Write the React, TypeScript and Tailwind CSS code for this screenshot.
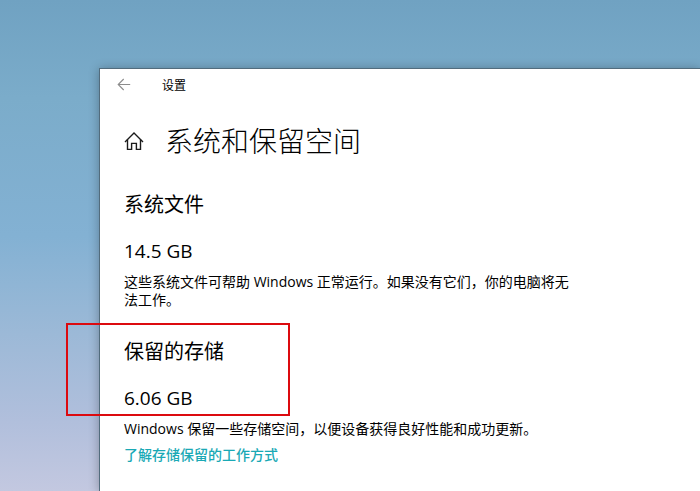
import React from "react";

const backIcon = () => (
  <svg width="14" height="14" viewBox="0 0 14 14" fill="none" stroke="#8c8c8c" strokeWidth="1.1">
    <path d="M13.2 6.5H1.2M6.7 1L1.2 6.5L6.7 12" />
  </svg>
);

const homeIcon = () => (
  <svg width="20" height="20" viewBox="0 0 20 20" fill="none" stroke="#1a1a1a" strokeWidth="1.4">
    <path d="M1 10.9L10 2.1L19 10.9" />
    <path d="M3.5 8.6V18.4H7.6V12.4H12.4V18.4H16.5V8.6" />
  </svg>
);

interface StorageSectionProps {
  title: string;
  size: string;
  highlighted?: boolean;
  children: React.ReactNode;
}

const StorageSection = ({ title, size, highlighted, children }: StorageSectionProps) => (
  <section className="relative">
    {/* red marker around the title and the size */}
    {highlighted && (
      <div className="absolute -top-[17px] -left-[58px] h-[93px] w-56 border-2 border-[#dc0a0f]" />
    )}
    <h2 className="text-xl leading-6">{title}</h2>
    <p className="mt-[22px] text-[19px] leading-6">{size}</p>
    <div className="mt-2.5 text-sm leading-[18px]">{children}</div>
  </section>
);

export default function App() {
  return (
    <div className="flex min-h-screen flex-col overflow-hidden bg-[linear-gradient(to_bottom,#70a2c2_0%,#7bacca_20%,#83b1d3_48%,#9cb9d7_68%,#b1bfdc_86%,#c3c8e0_100%)] pt-[68px] pl-[99px] font-['Open_Sans','Noto_Sans_CJK_SC',sans-serif] text-black">
      <div className="flex-1 border-t border-l border-[#526c7d] bg-white shadow-[0_1px_10px_rgba(0,0,0,0.3)]">
        <header className="flex h-8 items-center gap-[31px] pl-[17px]">
          <button type="button" aria-label="返回">
            {backIcon()}
          </button>
          <span className="pt-0.5 text-xs">设置</span>
        </header>

        <main className="px-6 pt-5">
          <div className="flex items-center gap-[21px]">
            <button type="button" aria-label="主页">
              {homeIcon()}
            </button>
            <h1 className="text-[28px] leading-10 font-light">系统和保留空间</h1>
          </div>

          <div className="mt-8 flex max-w-[450px] flex-col gap-[31px]">
            <StorageSection title="系统文件" size="14.5 GB">
              <p>这些系统文件可帮助 Windows 正常运行。如果没有它们，你的电脑将无法工作。</p>
            </StorageSection>

            <StorageSection title="保留的存储" size="6.06 GB" highlighted>
              <p>Windows 保留一些存储空间，以便设备获得良好性能和成功更新。</p>
              <a href="#" className="mt-2 inline-block font-medium text-[#1aa9b5]">
                了解存储保留的工作方式
              </a>
            </StorageSection>
          </div>
        </main>
      </div>
    </div>
  );
}
